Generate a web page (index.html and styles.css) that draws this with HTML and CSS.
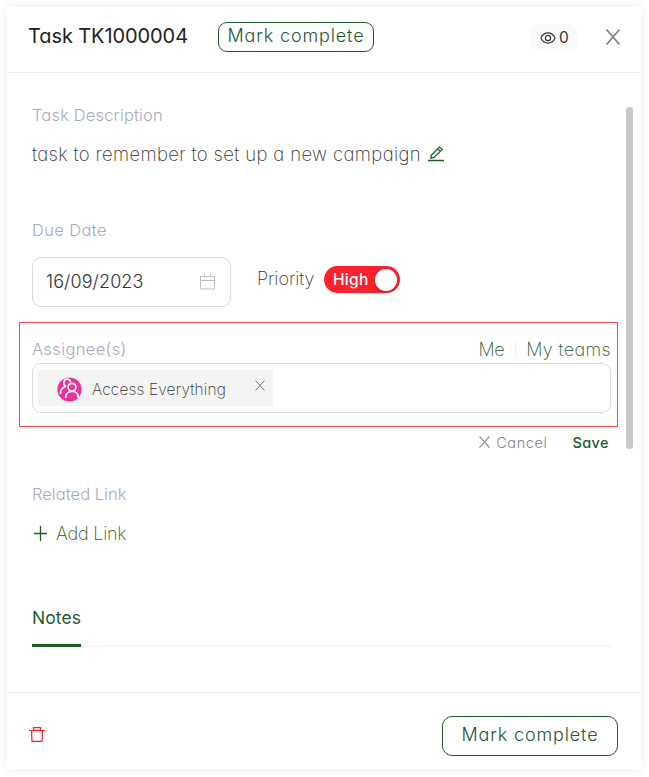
FILE: index.html
```html
<!DOCTYPE html>
<html lang="en">
<head>
<meta charset="utf-8">
<title>Task TK1000004</title>
<link rel="stylesheet" href="styles.css">
</head>
<body>
<section class="panel">
  <header class="header">
    <h1 class="title">Task TK1000004</h1>
    <button class="btn btn-small">Mark complete</button>
    <div class="watchers">
      <svg width="16" height="12" viewBox="0 0 16 12" fill="none" stroke="#333" stroke-width="1.2"><path d="M.9 6C2.6 2.5 5 .9 8 .9S13.400 2.500 15.100 6C13.400 9.500 11 11.100 8 11.100S2.600 9.500.9 6z"/><circle cx="8" cy="6" r="2.600"/></svg>
      <span>0</span>
    </div>
    <button class="close" aria-label="Close"><svg width="14" height="16" viewBox="0 0 14 16" fill="none" stroke="#868686" stroke-width="1.700"><path d="M.6.6 13.400 15.400M13.400.6.6 15.400"/></svg></button>
  </header>

  <main class="content">
    <div class="scrollbar"></div>
    <div class="field">
      <div class="label label-desc">Task Description</div>
      <div class="description">
        <span>task to remember to set up a new campaign</span>
        <svg width="16" height="16" viewBox="0 0 16 16" fill="none" stroke="#1e5b2d" stroke-width="1.300"><path d="M0 14.500h16" stroke-width="1.500"/><path d="M3.200 9.300 11.400 1.100 14.200 3.600 6 11.500 2.900 12.200zM9.800 2.900 12.300 5.300"/></svg>
      </div>
    </div>

    <div class="field due">
      <div class="label label-due">Due Date</div>
      <div class="due-row">
        <div class="date-input">
          <span>16/09/2023</span>
          <svg width="16" height="17" viewBox="0 0 16 17" fill="none" stroke="#bfbfbf" stroke-width="1"><path d="M.5 3.500h14v12.500H.5zM.5 7.500h14M4.500.5v4M10.500.5v4"/></svg>
        </div>
        <span class="priority">Priority</span>
        <div class="toggle"><span>High</span><i class="knob"></i></div>
      </div>
    </div>

    <div class="assignees">
      <div class="assignees-head">
        <div class="label label-assign">Assignee(s)</div>
        <a class="link-me">Me</a>
        <i class="divider"></i>
        <a class="link-teams">My teams</a>
      </div>
      <div class="select">
        <div class="tag">
          <svg class="avatar" width="25" height="25" viewBox="0 0 25 25" fill="none" stroke="#fff" stroke-width="1.700" stroke-linecap="round"><circle cx="12.500" cy="12.500" r="12.100" fill="#ee2f97" stroke="none"/><circle cx="15" cy="10.200" r="3.900"/><path d="M8.600 20.400c.2-3.700 2.200-5.900 6.400-5.900s6.100 2.200 6.300 5.900M13.500 4.600C12.600 2.200 10.400 1.600 8.600 2.500 6.100 3.700 6 7.200 8.600 9.300M7.600 10C5 10.800 3.700 13 3.500 16.300"/></svg>
          <span>Access Everything</span>
          <svg class="tag-close" width="10" height="11" viewBox="0 0 10 11" fill="none" stroke="#777" stroke-width="1"><path d="M.5.5 9.500 10.500M9.500.5.5 10.500"/></svg>
        </div>
      </div>
    </div>

    <div class="actions">
      <a class="cancel"><svg width="11" height="12" viewBox="0 0 11 12" fill="none" stroke="#85859c" stroke-width="1.100"><path d="M.5.4 10.500 11.600M10.500.4.5 11.600"/></svg><span>Cancel</span></a>
      <a class="save">Save</a>
    </div>

    <div class="field">
      <div class="label label-related">Related Link</div>
      <a class="add-link"><svg width="13" height="15" viewBox="0 0 13 15" stroke="#1e5b2d" stroke-width="1.300"><path d="M0 7.500h13M6.500 0v15"/></svg><span>Add Link</span></a>
    </div>

    <nav class="tabs"><a class="tab">Notes</a></nav>
  </main>

  <footer class="footer">
    <button class="delete" aria-label="Delete"><svg width="16" height="16" viewBox="0 0 16 16" fill="none" stroke="#f5222d" stroke-width="1.200"><path d="M0 4.500h16M2.500 4.500 3 15.400h10l.5-10.900"/><path d="M4.500 4V1.500h7V4" fill="#fbc4c7"/></svg></button>
    <button class="btn btn-large">Mark complete</button>
  </footer>
</section>
</body>
</html>
```
FILE: styles.css
```css
* { box-sizing: border-box; }

body {
  margin: 0;
  padding: 7px 8px 8px 7px;
  background: #fff;
  font-family: Inter, "Open Sans", sans-serif;
  font-feature-settings: "cv11" 1;
  color: #333;
}

button {
  padding: 0;
  border: 0;
  background: none;
  font: inherit;
  font-feature-settings: inherit;
}

svg { display: block; flex: none; }

.panel {
  display: flex;
  flex-direction: column;
  width: 634px;
  height: 762px;
  background: #fff;
  box-shadow: 0 0 12px rgba(0, 0, 0, .08);
}

.header {
  display: flex;
  align-items: flex-start;
  height: 66px;
  padding: 0 21px 0 21px;
  border-bottom: 1px solid #eee;
}

.title {
  width: 190px;
  margin: 14px 0 0;
  font-size: 20px;
  line-height: 30px;
  font-weight: 400;
  letter-spacing: -.09px;
  color: #222;
  white-space: nowrap;
}

.btn {
  border: 1px solid #1e5b2d;
  color: #1e5b2d;
  font-size: 18px;
  font-weight: 300;
  letter-spacing: .86px;
  white-space: nowrap;
}

.btn-small {
  width: 156px;
  height: 30px;
  margin-top: 15px;
  line-height: 26px;
  padding-bottom: 2px;
  border-radius: 9px;
}

.watchers {
  display: flex;
  align-items: center;
  gap: 3px;
  width: 48px;
  height: 27px;
  margin: 17px 28px 0 auto;
  padding-left: 10px;
  border-radius: 10px;
  background: #fafafa;
  font-size: 15.5px;
}

.close { margin-top: 22px; }

.content {
  position: relative;
  flex: 1;
  padding: 30px 30px 0 25px;
}

.scrollbar {
  position: absolute;
  top: 34px;
  right: 8px;
  width: 7px;
  height: 342px;
  border-radius: 4px;
  background: #c9c9c9;
}

.label {
  font-size: 16.5px;
  line-height: 24px;
  font-weight: 300;
  color: #a9a9c2;
}

.label-desc { letter-spacing: .16px; }
.label-due { letter-spacing: .36px; }
.label-assign { margin: -2px auto 0 0; letter-spacing: .35px; }
.label-related { letter-spacing: .03px; }

.description {
  display: flex;
  gap: 7px;
  margin-top: 14px;
  font-size: 18.5px;
  line-height: 27px;
  font-weight: 250;
  letter-spacing: .37px;
  white-space: nowrap;
}

.description svg { margin-top: 5px; }

.due { margin-top: 50px; }

.due-row {
  display: flex;
  margin-top: 15px;
  font-size: 18px;
}

.date-input {
  display: flex;
  align-items: center;
  justify-content: space-between;
  width: 199px;
  height: 50px;
  padding: 0 14px 0 13px;
  border: 1px solid #dcdcdc;
  border-radius: 9px;
  font-weight: 300;
  letter-spacing: .1px;
}

.date-input span { margin-top: -2px; }
.date-input svg { margin-top: -2px; }

.priority {
  width: 67px;
  margin: 8px 0 0 26px;
  line-height: 27px;
  font-weight: 250;
}

.toggle {
  display: flex;
  align-items: center;
  justify-content: space-between;
  width: 76px;
  height: 27px;
  margin-top: 9px;
  padding: 0 3px 0 9px;
  border-radius: 14px;
  background: #f8222e;
  color: #fff;
  font-size: 15.5px;
  font-weight: 500;
  letter-spacing: .3px;
}

.knob {
  width: 22px;
  height: 22px;
  border-radius: 50%;
  background: #fff;
  box-shadow: 0 2px 4px rgba(0, 35, 11, .2);
}

.assignees {
  width: 599px;
  height: 105px;
  margin: 15px 0 0 -13px;
  padding: 13px 6px 0 12px;
  border: 1px solid #f14c4c;
}

.assignees-head {
  display: flex;
  align-items: center;
  height: 27px;
  font-size: 18px;
  font-weight: 250;
  line-height: 27px;
  color: #1e5b2d;
  white-space: nowrap;
}

.link-me { letter-spacing: -.4px; }
.divider { width: 1px; height: 16px; margin: 0 10px 0 11px; background: #eee; }
.link-teams { letter-spacing: .4px; }

.select {
  width: 579px;
  height: 50px;
  padding: 6px 5px;
  border: 1px solid #dcdcdc;
  border-radius: 9px;
}

.tag {
  display: flex;
  align-items: center;
  width: 235px;
  height: 36px;
  padding: 3px 8px 0 19px;
  border-radius: 2px;
  background: #f4f4f4;
  font-size: 15.5px;
  font-weight: 250;
  letter-spacing: .15px;
  white-space: nowrap;
}

.avatar { margin-right: 10px; }
.tag-close { margin: -9px 0 0 auto; }

.actions {
  display: flex;
  justify-content: flex-end;
  margin: 5px 2px 0 0;
  font-size: 14.5px;
  line-height: 21px;
}

.cancel {
  display: flex;
  align-items: center;
  gap: 6px;
  font-weight: 300;
  letter-spacing: .6px;
  color: #85859c;
}

.cancel svg { margin-top: -1px; }

.save {
  margin-left: 25px;
  font-weight: 500;
  letter-spacing: .4px;
  color: #1e5b2d;
}

.actions + .field { margin-top: 29px; }

.add-link {
  display: flex;
  align-items: center;
  gap: 9px;
  margin-top: 14px;
  padding-left: 2px;
  font-size: 18px;
  line-height: 27px;
  font-weight: 250;
  letter-spacing: -.2px;
  color: #1e5b2d;
}

.add-link svg { margin-top: -1px; }

.tabs {
  display: flex;
  height: 42px;
  margin-top: 58px;
  border-bottom: 1px solid #f0f0f0;
}

.tab {
  width: 49px;
  height: 42px;
  border-bottom: 3px solid #1e5b2d;
  font-size: 17.500px;
  line-height: 25px;
  letter-spacing: .05px;
  color: #1e5b2d;
}

.footer {
  display: flex;
  justify-content: space-between;
  align-items: flex-start;
  height: 77px;
  padding: 23px 23px 0 22px;
  border-top: 1px solid #eee;
}

.delete { margin-top: 10px; }

.btn-large {
  width: 176px;
  height: 40px;
  padding-bottom: 3px;
  border-radius: 10px;
}
```
